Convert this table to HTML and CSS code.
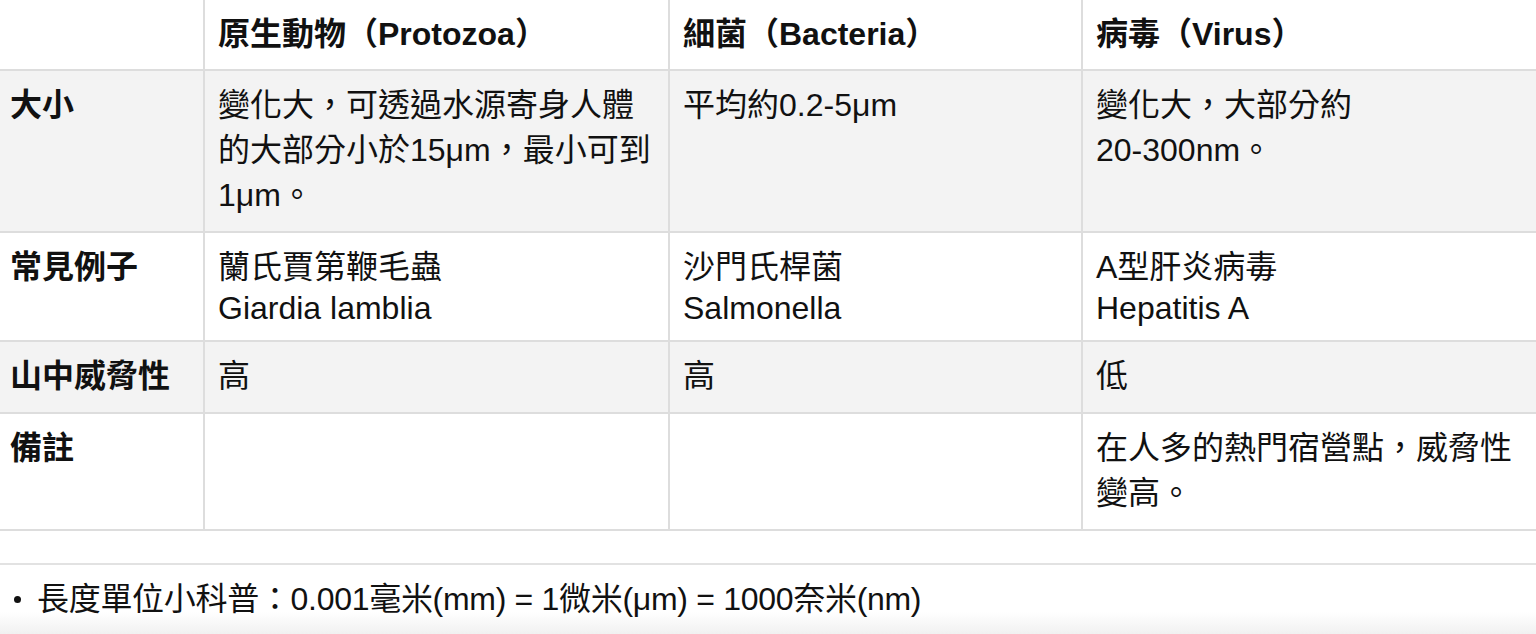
FILE: index.html
```html
<!DOCTYPE html>
<html lang="zh-Hant">
<head>
<meta charset="utf-8">
<title>原生動物、細菌、病毒比較</title>
<link rel="stylesheet" href="styles.css">
</head>
<body>
<table class="compare">
  <colgroup>
    <col class="c-label">
    <col class="c-proto">
    <col class="c-bact">
    <col class="c-virus">
  </colgroup>
  <thead>
    <tr>
      <th class="label"></th>
      <th>原生動物（Protozoa）</th>
      <th>細菌（Bacteria）</th>
      <th>病毒（Virus）</th>
    </tr>
  </thead>
  <tbody>
    <tr class="shade">
      <th class="label">大小</th>
      <td>變化大，可透過水源寄身人體的大部分小於15μm，最小可到1μm。</td>
      <td>平均約0.2-5μm</td>
      <td>變化大，大部分約<span class="nowrap">20-300nm。</span></td>
    </tr>
    <tr>
      <th class="label">常見例子</th>
      <td>蘭氏賈第鞭毛蟲<span class="latin-line">Giardia lamblia</span></td>
      <td>沙門氏桿菌<span class="latin-line">Salmonella</span></td>
      <td>A型肝炎病毒<span class="latin-line">Hepatitis A</span></td>
    </tr>
    <tr class="shade">
      <th class="label">山中威脅性</th>
      <td>高</td>
      <td>高</td>
      <td>低</td>
    </tr>
    <tr>
      <th class="label">備註</th>
      <td></td>
      <td></td>
      <td>在人多的熱門宿營點，威脅性變高。</td>
    </tr>
  </tbody>
</table>
<ul class="notes">
  <li><span class="dot"></span><span class="note-text">長度單位小科普：0.001毫米(mm) = 1微米(μm) = 1000奈米(nm)</span></li>
</ul>
</body>
</html>
```

FILE: styles.css
```css
html, body {
  margin: 0;
  padding: 0;
  background: #ffffff;
}

body {
  font-family: "Liberation Sans", "Noto Sans CJK TC", sans-serif;
  font-size: 32px;
  line-height: 45px;
  color: #111111;
  width: 1536px;
  height: 634px;
  overflow: hidden;
  display: flex;
  flex-direction: column;
}

.compare {
  width: 1536px;
  table-layout: fixed;
  border-collapse: collapse;
}

.c-label { width: 204px; }
.c-proto { width: 465px; }
.c-bact { width: 413px; }
.c-virus { width: 454px; }

.compare th,
.compare td {
  text-align: left;
  vertical-align: top;
  padding: 12px 14px 13px 13px;
  border-left: 2px solid #dddddd;
  border-bottom: 2px solid #dddddd;
}

.compare th {
  font-weight: bold;
}

.compare td {
  font-weight: normal;
}

.compare thead th {
  padding-bottom: 12px;
}

.compare .label {
  border-left: none;
  padding-left: 10px;
  padding-right: 6px;
}

.shade th,
.shade td {
  background: #f3f3f3;
}

.nowrap {
  white-space: nowrap;
}

.latin-line {
  display: block;
  line-height: 37px;
}

.notes {
  list-style: none;
  margin: 32px 0 0 0;
  padding: 12px 0 0 0;
  border-top: 2px solid #e2e2e2;
  flex: 1;
  background: linear-gradient(to bottom, #ffffff 0%, #ffffff 68%, #f1f1f1 100%);
}

.notes li {
  display: flex;
  align-items: center;
  gap: 16px;
  padding-left: 14px;
}

.note-text {
  letter-spacing: -0.3px;
}

.dot {
  width: 7px;
  height: 7px;
  border-radius: 50%;
  background: #111111;
  flex: none;
}
```
